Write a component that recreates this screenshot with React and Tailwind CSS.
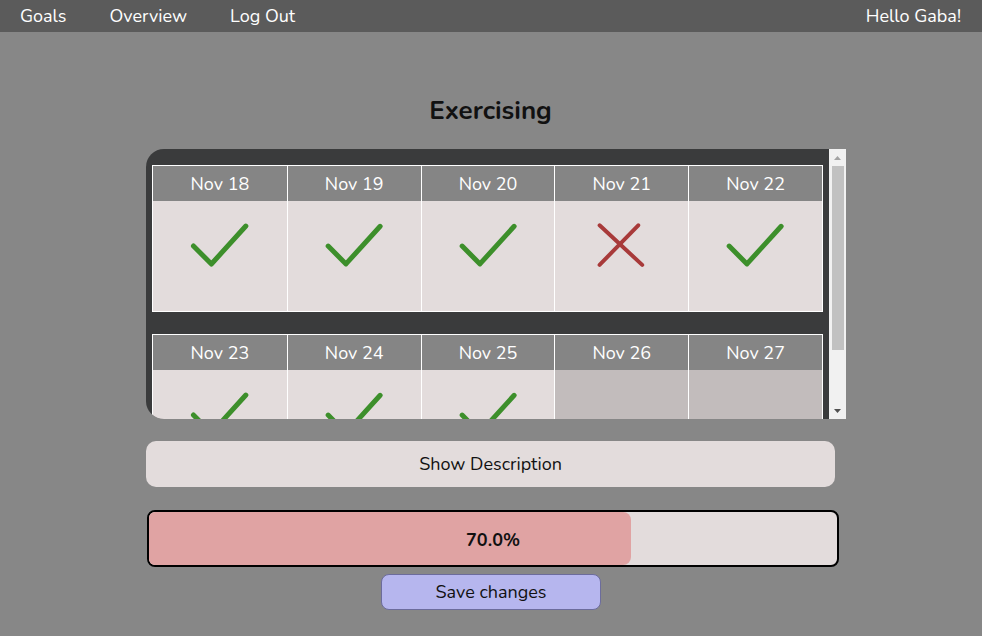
import React from "react";

const font = { fontFamily: "Nunito, Lato, 'Noto Sans', sans-serif" };

function Check() {
  return (
    <svg width="134" height="110" viewBox="0 0 134 110" className="block">
      <polyline points="40.5,45 58.5,63 93,25" fill="none" stroke="#3d8f2b" strokeWidth="5" strokeLinecap="round" strokeLinejoin="round" />
    </svg>
  );
}

function Cross() {
  return (
    <svg width="134" height="110" viewBox="0 0 134 110" className="block">
      <line x1="45" y1="24" x2="88" y2="64" stroke="#a83a3a" strokeWidth="4" strokeLinecap="round" />
      <line x1="84" y1="24" x2="45" y2="64" stroke="#a83a3a" strokeWidth="4" strokeLinecap="round" />
    </svg>
  );
}

function Cell({ label, state, first }) {
  return (
    <div className={first ? "flex flex-col" : "flex flex-col border-l border-white"}>
      <div className="h-[35px] bg-[#858585] text-white text-[18px] flex items-center justify-center pt-[2px]">{label}</div>
      <div className={state === "empty" ? "h-[110px] bg-[#c2bcbc]" : "h-[110px] bg-[#e3dcdc] flex justify-center"}>
        {state === "yes" && <Check />}
        {state === "no" && <Cross />}
      </div>
    </div>
  );
}

function Week({ days }) {
  return (
    <div className="w-[671px] border border-white grid grid-cols-5">
      {days.map((d, i) => (
        <Cell key={d.label} label={d.label} state={d.state} first={i === 0} />
      ))}
    </div>
  );
}

export default function App() {
  const week1 = [
    { label: "Nov 18", state: "yes" },
    { label: "Nov 19", state: "yes" },
    { label: "Nov 20", state: "yes" },
    { label: "Nov 21", state: "no" },
    { label: "Nov 22", state: "yes" },
  ];
  const week2 = [
    { label: "Nov 23", state: "yes" },
    { label: "Nov 24", state: "yes" },
    { label: "Nov 25", state: "yes" },
    { label: "Nov 26", state: "empty" },
    { label: "Nov 27", state: "empty" },
  ];
  return (
    <div className="min-h-screen bg-[#878787]" style={font}>
      <nav className="h-[32px] bg-[#5b5b5b] flex items-center justify-between pl-[20px] pr-[21px] text-white text-[18px]">
        <div className="flex gap-[43px]">
          <span>Goals</span>
          <span>Overview</span>
          <span>Log Out</span>
        </div>
        <span>Hello Gaba!</span>
      </nav>
      <div className="ml-[146px] w-[700px] flex flex-col">
        <h1 className="w-[689px] text-center text-[26px] leading-[32px] font-bold text-[#111] mt-[62px] pt-[1px]">Exercising</h1>
        <div className="mt-[22px] h-[270px] flex">
          <div className="w-[683px] h-full bg-[#3a3b3c] rounded-l-[18px] overflow-hidden pt-[16px] px-[6px] flex flex-col gap-[22px]">
            <Week days={week1} />
            <Week days={week2} />
          </div>
          <div className="w-[17px] h-full bg-[#f1f1f1] flex flex-col items-center">
            <div className="h-[17px] flex items-center justify-center">
              <svg width="7" height="4" viewBox="0 0 7 4"><polygon points="0,4 7,4 3.5,0" fill="#a3a3a3" /></svg>
            </div>
            <div className="w-[12px] h-[184px] bg-[#c1c1c1]"></div>
            <div className="flex-1"></div>
            <div className="h-[17px] flex items-center justify-center">
              <svg width="7" height="4" viewBox="0 0 7 4"><polygon points="0,0 7,0 3.5,4" fill="#505050" /></svg>
            </div>
          </div>
        </div>
        <div className="mt-[22px] w-[689px] h-[46px] bg-[#e3dcdc] rounded-[10px] flex items-center justify-center text-[18px] text-[#111]">
          Show Description
        </div>
        <div className="mt-[23px] ml-[1px] w-[692px] h-[57px] border-2 border-black rounded-[8px] bg-[#e3dcdc] relative overflow-hidden">
          <div className="h-full bg-[#e0a3a3] rounded-r-[8px]" style={{ width: "70%" }}></div>
          <div className="absolute inset-0 flex items-center justify-center text-[18px] font-bold text-[#111] pt-[4px]">70.0%</div>
        </div>
        <div className="mt-[7px] ml-[235px] w-[220px] h-[36px] bg-[#b6b6ee] border border-[#6c6c9c] rounded-[8px] flex items-center justify-center text-[18px] text-[#111]">
          Save changes
        </div>
      </div>
    </div>
  );
}
